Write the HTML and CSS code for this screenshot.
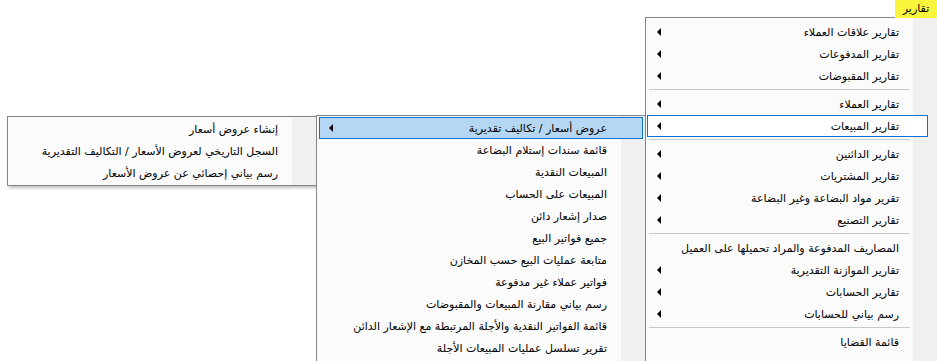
FILE: index.html
```html
<!DOCTYPE html>
<html lang="ar">
<head>
    <meta charset="UTF-8">
    <title>تقارير</title>
    <link rel="stylesheet" href="styles.css">
</head>
<body>
    <div class="menubar-tab">تقارير</div>

    <div class="menu menu-main" dir="rtl">
        <div class="item"><span>تقارير علاقات العملاء</span><i class="arrow"></i></div>
        <div class="item"><span>تقارير المدفوعات</span><i class="arrow"></i></div>
        <div class="item"><span>تقارير المقبوضات</span><i class="arrow"></i></div>
        <div class="sep"></div>
        <div class="item"><span>تقارير العملاء</span><i class="arrow"></i></div>
        <div class="item focused"><span>تقارير المبيعات</span><i class="arrow"></i></div>
        <div class="sep"></div>
        <div class="item"><span>تقارير الدائنين</span><i class="arrow"></i></div>
        <div class="item"><span>تقارير المشتريات</span><i class="arrow"></i></div>
        <div class="item"><span>تقرير مواد البضاعة وغير البضاعة</span><i class="arrow"></i></div>
        <div class="item"><span>تقارير التصنيع</span><i class="arrow"></i></div>
        <div class="sep"></div>
        <div class="item"><span>المصاريف المدفوعة والمراد تحميلها على العميل</span></div>
        <div class="item"><span>تقارير الموازنة التقديرية</span><i class="arrow"></i></div>
        <div class="item"><span>تقارير الحسابات</span><i class="arrow"></i></div>
        <div class="item"><span>رسم بياني للحسابات</span><i class="arrow"></i></div>
        <div class="sep"></div>
        <div class="item"><span>قائمة القضايا</span></div>
    </div>

    <div class="menu menu-sales" dir="rtl">
        <div class="item selected"><span>عروض أسعار / تكاليف تقديرية</span><i class="arrow"></i></div>
        <div class="item"><span>قائمة سندات إستلام البضاعة</span></div>
        <div class="item"><span>المبيعات النقدية</span></div>
        <div class="item"><span>المبيعات على الحساب</span></div>
        <div class="item"><span>صدار إشعار دائن</span></div>
        <div class="item"><span>جميع فواتير البيع</span></div>
        <div class="item"><span>متابعة عمليات البيع حسب المخازن</span></div>
        <div class="item"><span>فواتير عملاء غير مدفوعة</span></div>
        <div class="item"><span>رسم بياني  مقارنة المبيعات والمقبوضات</span></div>
        <div class="item"><span>قائمة الفواتير  النقدية والأجلة المرتبطة مع الإشعار الدائن</span></div>
        <div class="item"><span>تقرير تسلسل عمليات المبيعات الأجلة</span></div>
    </div>

    <div class="menu menu-quotes" dir="rtl">
        <div class="item"><span>إنشاء عروض أسعار</span></div>
        <div class="item"><span>السجل التاريخي لعروض الأسعار / التكاليف التقديرية</span></div>
        <div class="item"><span>رسم بياني إحصائي عن عروض الأسعار</span></div>
    </div>
</body>
</html>
```

FILE: styles.css
```css
* {
    box-sizing: border-box;
    margin: 0;
    padding: 0;
}

html {
    overflow: hidden;
}

body {
    font-family: 'DejaVu Sans', Tahoma, sans-serif;
    font-size: 11px;
    color: #000;
    background-color: #fff;
    width: 937px;
    height: 361px;
    overflow: hidden;
    position: relative;
}

.menubar-tab {
    position: absolute;
    top: 0;
    left: 895px;
    width: 42px;
    height: 18px;
    background-color: #f8f53c;
    line-height: 17px;
    text-align: center;
    z-index: 2;
}

/* popup menus */
.menu {
    position: absolute;
    border: 1px solid #858585;
    background: linear-gradient(to left, #f0f0f0 0, #f0f0f0 24px, #fbfbfb 24px);
    box-shadow: 2px 2px 3px rgba(0, 0, 0, 0.25);
    overflow: hidden;
}

.menu-main {
    top: 17px;
    left: 645px;
    width: 292px;
    height: 344px;
    padding-top: 3px;
    border-right: none;
    border-bottom: none;
    box-shadow: none;
}

.menu-sales {
    top: 115px;
    left: 316px;
    width: 330px;
    height: 246px;
    padding-top: 1px;
    border-bottom: none;
    box-shadow: none;
    z-index: 1;
}

.menu-quotes {
    top: 116px;
    left: 7px;
    width: 310px;
    height: 70px;
    padding-top: 1px;
}

.item {
    display: flex;
    align-items: center;
    justify-content: space-between;
    height: 22px;
    margin: 0 2px;
    padding: 0 35px 0 9px;
    border: 1px solid transparent;
    white-space: nowrap;
}

.menu-main .item {
    margin: 0 9px 0 1px;
    padding-right: 28px;
}

.item.focused {
    background-color: #fff;
    border-color: #0a74d6;
}

.item.selected {
    background-color: #b6d7f4;
    border-color: #0a74d6;
}

.arrow {
    width: 0;
    height: 0;
    border-top: 4px solid transparent;
    border-bottom: 4px solid transparent;
    border-right: 4px solid #000;
}

.sep {
    height: 6px;
    margin: 0 27px 0 3px;
    background: linear-gradient(#c8c8c8, #c8c8c8) 0 2px / 100% 1px no-repeat;
}
```
